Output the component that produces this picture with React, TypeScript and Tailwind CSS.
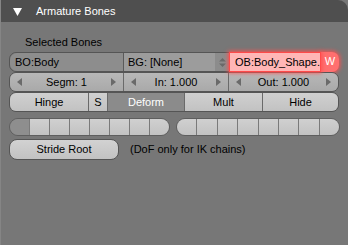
import React from "react";

const font = { fontFamily: '"Liberation Sans", Arial, sans-serif' };

function ArrowL() {
  return (
    <svg width="5" height="8" viewBox="0 0 5 8" className="shrink-0">
      <path d="M5 0 L0 4 L5 8 Z" fill="#6a6a6a" />
    </svg>
  );
}

function ArrowR() {
  return (
    <svg width="5" height="8" viewBox="0 0 5 8" className="shrink-0">
      <path d="M0 0 L5 4 L0 8 Z" fill="#6a6a6a" />
    </svg>
  );
}

function NumField({ label, className }: { label: string; className: string }) {
  return (
    <div className={`flex items-center justify-between px-[7px] bg-gradient-to-b from-[#b8b8b8] to-[#a9a9a9] ${className}`}>
      <ArrowL />
      <span>{label}</span>
      <ArrowR />
    </div>
  );
}

function Layers({ width }: { width: string }) {
  const cells = [0, 1, 2, 3, 4, 5, 6, 7];
  return (
    <div className={`flex h-[18px] ${width} rounded-[9px] overflow-hidden border border-[#5e5e5e]`}>
      {cells.map((i) => (
        <div
          key={i}
          className={`flex-1 ${i > 0 ? "border-l border-[#7a7a7a]" : ""} ${
            i === 0 && width === "w-[161px]" ? "bg-[#8e8e8e]" : "bg-gradient-to-b from-[#d0d0d0] to-[#c2c2c2]"
          }`}
        />
      ))}
    </div>
  );
}

export default function App() {
  return (
    <div className="w-[348px] h-[245px] bg-[#777777] border-l border-[#858585] text-[11px] text-black overflow-hidden" style={font}>
      <div className="h-[22px] bg-[#4f4f4f] rounded-tr-[10px] flex items-center">
        <svg width="9" height="8" viewBox="0 0 9 8" className="ml-[12px] mt-[1px]">
          <path d="M0 0 L9 0 L4.5 8 Z" fill="#ffffff" />
        </svg>
        <span className="ml-[14px] text-white">Armature Bones</span>
      </div>

      <div className="pl-[8px] pt-[13px]">
        <div className="pl-[16px] h-[14px] leading-[14px]">Selected Bones</div>

        <div className="mt-[3px] w-[330px] flex flex-col">
          {/* row 1 */}
          <div className="flex h-[20px] leading-[18px] rounded-[7px] border border-[#555]">
            <div className="w-[114px] rounded-l-[7px] bg-[#8d8d8d] pl-[5px] border-r border-[#5a5a5a]">BO:Body</div>
            <div className="w-[91px] bg-[#9c9c9c] pl-[4px]">BG: [None]</div>
            <div className="w-[14px] bg-[#8c8c8c] flex items-center justify-center">
              <svg width="7" height="9" viewBox="0 0 7 9">
                <path d="M3.5 0 L7 3.5 L0 3.5 Z M0 5.5 L7 5.5 L3.5 9 Z" fill="#6a6a6a" />
              </svg>
            </div>
            <div className="w-[92px] bg-[#ffb6b6] pl-[5px] border border-[#ff4a4a] shadow-[0_0_4px_1px_#ff5050] relative z-10 -my-[1px]">
              OB:Body_Shape.
            </div>
            <div className="flex-1 bg-[#ff6f6f] text-white text-center rounded-r-[7px] shadow-[0_0_4px_1px_#ff5050] -my-[1px] -mr-[1px]">
              W
            </div>
          </div>

          {/* row 2 */}
          <div className="flex h-[20px] leading-[18px] rounded-[7px] border border-[#555] overflow-hidden">
            <NumField label="Segm: 1" className="w-[114px] border-r border-[#6a6a6a]" />
            <NumField label="In: 1.000" className="w-[105px] border-r border-[#6a6a6a]" />
            <NumField label="Out: 1.000" className="flex-1" />
          </div>

          {/* row 3 */}
          <div className="flex h-[20px] leading-[18px] rounded-[7px] border border-[#555] overflow-hidden text-center">
            <div className="w-[79px] bg-gradient-to-b from-[#d0d0d0] to-[#c2c2c2] border-r border-[#6a6a6a]">Hinge</div>
            <div className="w-[19px] bg-gradient-to-b from-[#d0d0d0] to-[#c2c2c2] border-r border-[#6a6a6a]">S</div>
            <div className="w-[77px] bg-[#8b8b8b] text-white border-r border-[#6a6a6a]">Deform</div>
            <div className="w-[78px] bg-gradient-to-b from-[#d0d0d0] to-[#c2c2c2] border-r border-[#6a6a6a]">Mult</div>
            <div className="flex-1 bg-gradient-to-b from-[#d0d0d0] to-[#c2c2c2]">Hide</div>
          </div>
        </div>

        <div className="mt-[6px] w-[331px] flex gap-[6px]">
          <Layers width="w-[161px]" />
          <Layers width="w-[164px]" />
        </div>

        <div className="mt-[3px] flex items-center">
          <div className="w-[110px] h-[21px] leading-[19px] text-center rounded-[8px] border border-[#555] bg-gradient-to-b from-[#d2d2d2] to-[#c2c2c2]">
            Stride Root
          </div>
          <span className="ml-[11px]">(DoF only for IK chains)</span>
        </div>
      </div>
    </div>
  );
}
